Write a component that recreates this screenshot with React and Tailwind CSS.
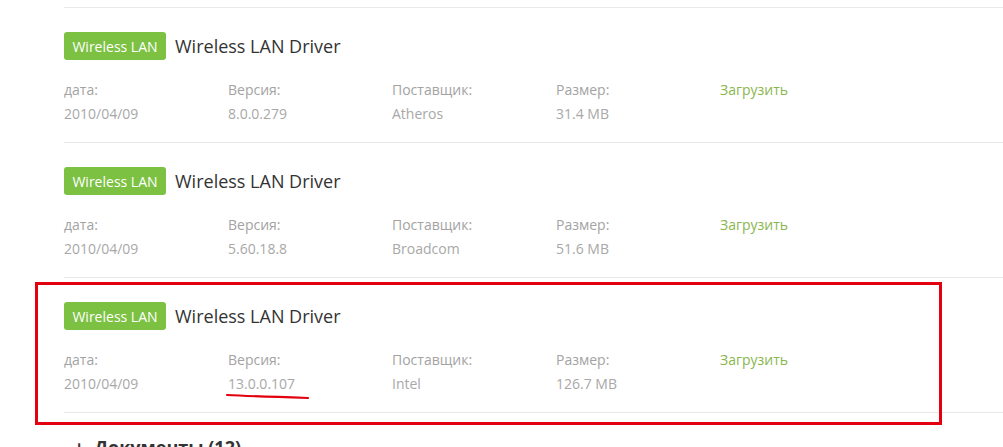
import React from 'react'

const drivers = [
  { date: '2010/04/09', version: '8.0.0.279', vendor: 'Atheros', size: '31.4 MB' },
  { date: '2010/04/09', version: '5.60.18.8', vendor: 'Broadcom', size: '51.6 MB' },
  { date: '2010/04/09', version: '13.0.0.107', vendor: 'Intel', size: '126.7 MB', marked: true },
]

function Field({ label, value, marked }) {
  return (
    <div className="w-[164px] shrink-0">
      <div className="text-[#a3a3a3] leading-6">{label}</div>
      <div className="text-[#a8a8a8] leading-6 relative">
        {value}
        {marked && (
          <svg className="absolute left-[-2px] top-[20px]" width="86" height="8" viewBox="0 0 86 8">
            <path d="M1 3 C 20 4, 50 5, 82 6" stroke="#e3000f" strokeWidth="2.2" fill="none" strokeLinecap="round" />
          </svg>
        )}
      </div>
    </div>
  )
}

function DriverRow({ d }) {
  return (
    <div className="border-b border-[#e8e8e8] pt-[24px] pb-[16px]">
      <div className="flex items-center gap-[9px] h-[28px]">
        <span className="bg-[#7cc142] text-white text-[14px] rounded-[3px] h-[28px] w-[102px] flex items-center justify-center">Wireless LAN</span>
        <span className="text-[18px] text-[#333] pt-[1px]">Wireless LAN Driver</span>
      </div>
      <div className="flex mt-[18px] text-[14px]">
        <Field label="дата:" value={d.date} />
        <Field label="Версия:" value={d.version} marked={d.marked} />
        <Field label="Поставщик:" value={d.vendor} />
        <Field label="Размер:" value={d.size} />
        <div className="leading-6">
          <a className="text-[#8ab650]" href="#">Загрузить</a>
        </div>
      </div>
    </div>
  )
}

export default function App() {
  return (
    <div className="relative w-[1003px] h-[447px] overflow-hidden bg-white" style={{ fontFamily: '"Open Sans", sans-serif' }}>
      <div className="pl-[64px]">
        <div className="h-[8px] border-b border-[#e8e8e8]" />
        {drivers.map((d, i) => <DriverRow key={i} d={d} />)}
        <div className="flex items-center gap-[10px] pt-[22px] pl-[10px] text-[18px] font-bold text-[#333] leading-6">
          <span>+</span>
          <span>Документы (12)</span>
        </div>
      </div>
      <div className="absolute left-[35px] top-[282px] w-[907px] h-[143px] border-[3px] border-[#e3000f]" />
    </div>
  )
}
